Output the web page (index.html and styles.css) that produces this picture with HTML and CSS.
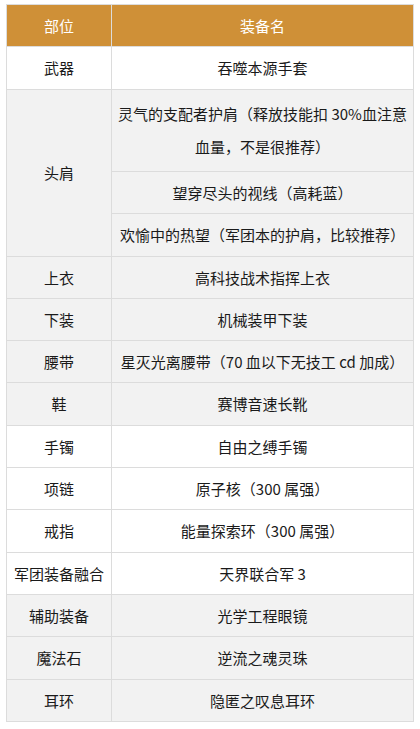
FILE: index.html
```html
<!DOCTYPE html>
<html lang="zh-CN">
<head>
<meta charset="utf-8">
<title>装备</title>
<link rel="stylesheet" href="styles.css">
</head>
<body>
<div class="wrap">
<table class="gear">
  <colgroup><col class="c1"><col class="c2"></colgroup>
  <thead>
    <tr><th>部位</th><th>装备名</th></tr>
  </thead>
  <tbody>
    <tr class="w"><td>武器</td><td>吞噬本源手套</td></tr>
    <tr class="g"><td rowspan="3">头肩</td><td class="tall">灵气的支配者护肩（释放技能扣 30%血注意<br>血量，不是很推荐）</td></tr>
    <tr class="g"><td>望穿尽头的视线（高耗蓝）</td></tr>
    <tr class="g"><td>欢愉中的热望（军团本的护肩，比较推荐）</td></tr>
    <tr class="g"><td>上衣</td><td>高科技战术指挥上衣</td></tr>
    <tr class="g"><td>下装</td><td>机械装甲下装</td></tr>
    <tr class="g"><td>腰带</td><td>星灭光离腰带（70 血以下无技工 cd 加成）</td></tr>
    <tr class="g"><td>鞋</td><td>赛博音速长靴</td></tr>
    <tr class="w"><td>手镯</td><td>自由之缚手镯</td></tr>
    <tr class="w"><td>项链</td><td>原子核（300 属强）</td></tr>
    <tr class="w"><td>戒指</td><td>能量探索环（300 属强）</td></tr>
    <tr class="w"><td>军团装备融合</td><td>天界联合军 3</td></tr>
    <tr class="g"><td>辅助装备</td><td>光学工程眼镜</td></tr>
    <tr class="g"><td>魔法石</td><td>逆流之魂灵珠</td></tr>
    <tr class="g"><td>耳环</td><td>隐匿之叹息耳环</td></tr>
  </tbody>
</table>
</div>
</body>
</html>
```

FILE: styles.css
```css
html, body {
  margin: 0;
  padding: 0;
  background: #ffffff;
}
.wrap {
  padding: 4px 6px;
}
.gear {
  width: 408px;
  table-layout: fixed;
  border-collapse: collapse;
  font-family: "Noto Sans CJK SC", "Noto Sans", sans-serif;
  font-size: 15px;
  color: #1a1a1a;
}
.c1 { width: 105px; }
.gear th,
.gear td {
  border: 1px solid #dcdcdc;
  padding: 4px 2px;
  line-height: 33.3px;
  text-align: center;
  vertical-align: middle;
  white-space: nowrap;
  font-weight: normal;
}
.gear th {
  background: #cf9037;
  color: #ffffff;
  border-color: #dcdcdc;
}
.gear thead th + th {
  border-left-color: #ead2ae;
}
.gear tr.w td { background: #ffffff; }
.gear tr.g td { background: #f2f2f2; }
.gear td.tall {
  padding-top: 7.4px;
  padding-bottom: 7.4px;
}
```
